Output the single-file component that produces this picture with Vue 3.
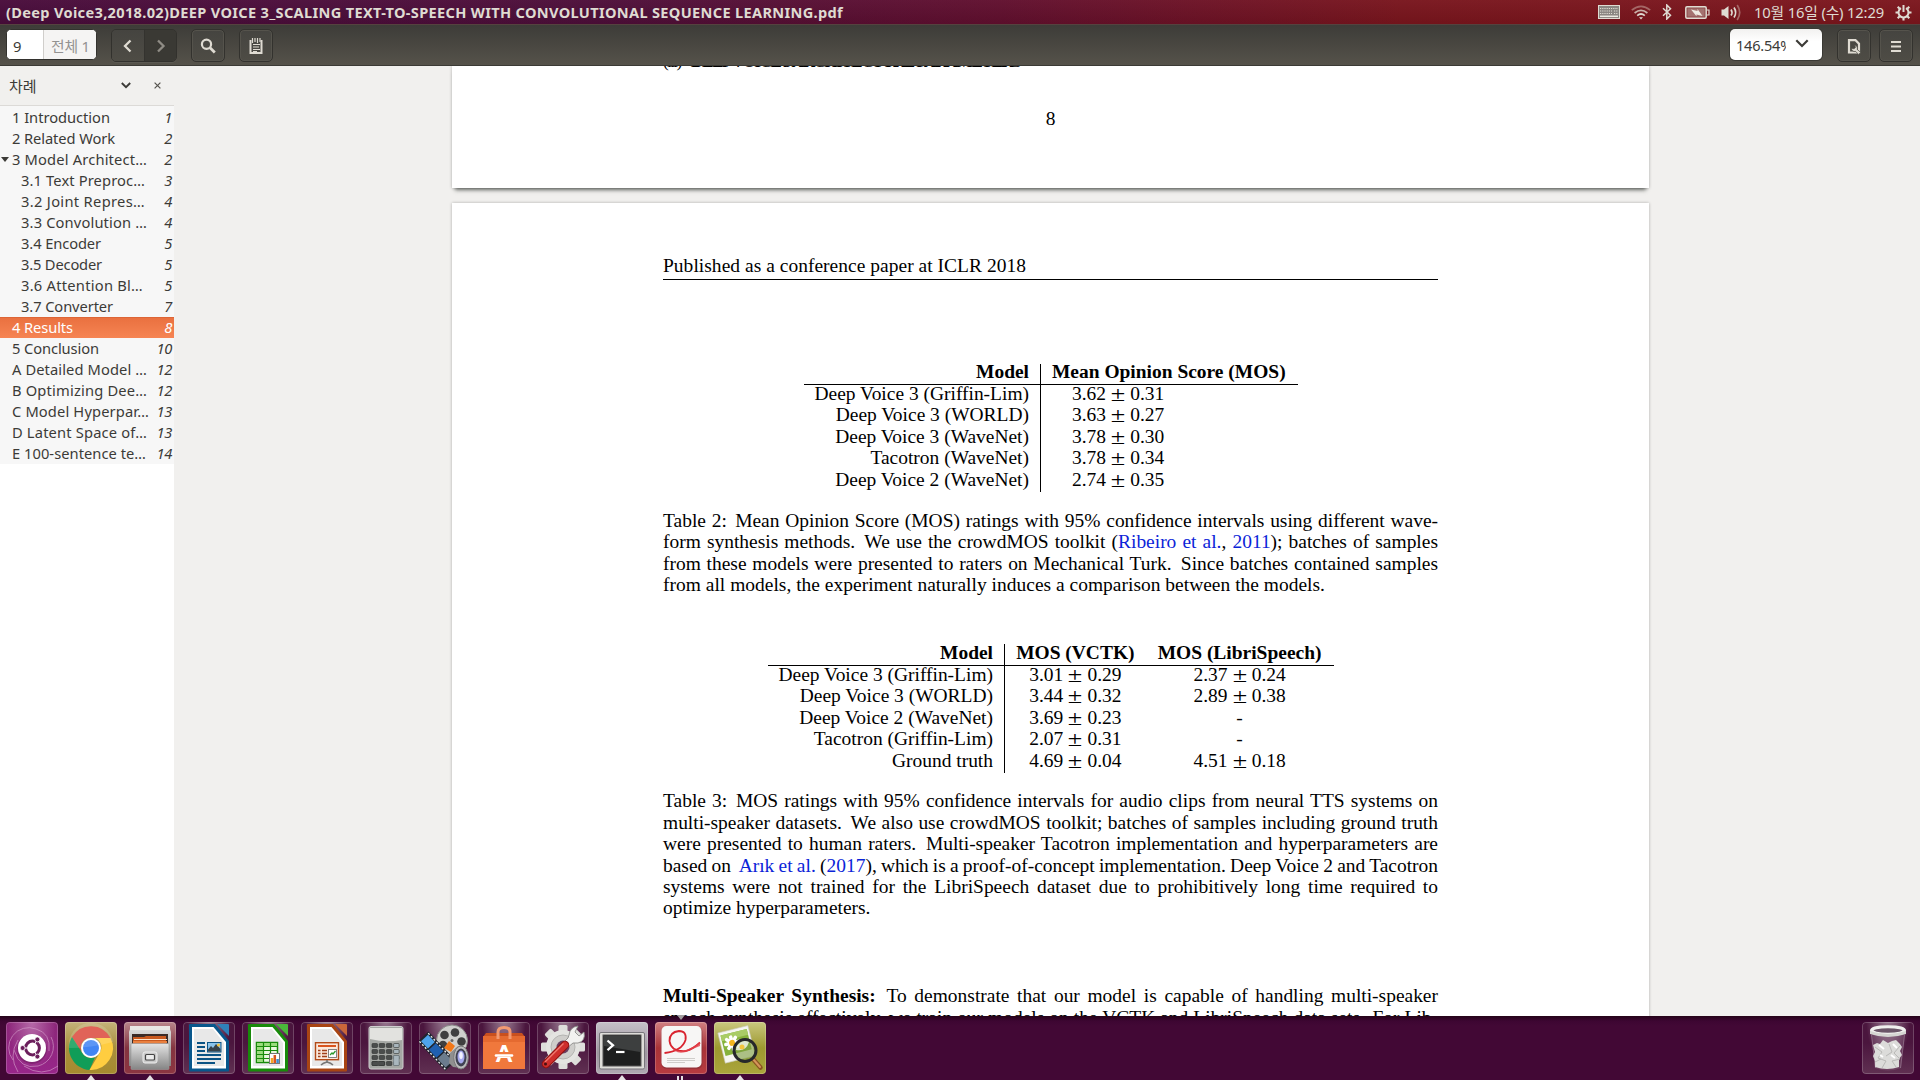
<script setup>
// Spreads the letters of a label so that it takes exactly the given width.
const fit = (el, width) => {
  const range = document.createRange()
  range.selectNodeContents(el)
  const natural = range.getBoundingClientRect().width
  el.style.letterSpacing = (width - natural) / el.textContent.length + 'px'
}
const vFit = {
  mounted: (el, { value }) => fit(el, value),
}

const outline = [
  { text: '1 Introduction', page: 1, w: 98 },
  { text: '2 Related Work', page: 2, w: 103 },
  { text: '3 Model Architect…', page: 2, w: 135, open: true },
  { text: '3.1 Text Preproc…', page: 3, w: 124, sub: true },
  { text: '3.2 Joint Repres…', page: 4, w: 124, sub: true },
  { text: '3.3 Convolution …', page: 4, w: 126, sub: true },
  { text: '3.4 Encoder', page: 5, w: 80, sub: true },
  { text: '3.5 Decoder', page: 5, w: 81, sub: true },
  { text: '3.6 Attention Bl…', page: 5, w: 122, sub: true },
  { text: '3.7 Converter', page: 7, w: 92, sub: true },
  { text: '4 Results', page: 8, w: 61, active: true },
  { text: '5 Conclusion', page: 10, w: 87 },
  { text: 'A Detailed Model …', page: 12, w: 135 },
  { text: 'B Optimizing Dee…', page: 12, w: 135 },
  { text: 'C Model Hyperpar…', page: 13, w: 137 },
  { text: 'D Latent Space of…', page: 13, w: 135 },
  { text: 'E 100-sentence te…', page: 14, w: 134 },
]

const table2 = [
  ['Deep Voice 3 (Griffin-Lim)', '3.62', '0.31'],
  ['Deep Voice 3 (WORLD)', '3.63', '0.27'],
  ['Deep Voice 3 (WaveNet)', '3.78', '0.30'],
  ['Tacotron (WaveNet)', '3.78', '0.34'],
  ['Deep Voice 2 (WaveNet)', '2.74', '0.35'],
]
const table3 = [
  ['Deep Voice 3 (Griffin-Lim)', '3.01', '0.29', '2.37', '0.24'],
  ['Deep Voice 3 (WORLD)', '3.44', '0.32', '2.89', '0.38'],
  ['Deep Voice 2 (WaveNet)', '3.69', '0.23'],
  ['Tacotron (Griffin-Lim)', '2.07', '0.31'],
  ['Ground truth', '4.69', '0.04', '4.51', '0.18'],
]
const calcKeys = [0, 1, 2, 3].flatMap((r) => [0, 1, 2, 3].map((c) => ({ r, c })))
const teeth = [0, 45, 90, 135, 180, 225, 270, 315]
</script>

<template>
  <div class="screen">
    <header class="panel">
      <span class="title" v-fit="837">(Deep Voice3,2018.02)DEEP VOICE 3_SCALING TEXT-TO-SPEECH WITH CONVOLUTIONAL SEQUENCE LEARNING.pdf</span>
      <div class="indicators">
        <svg class="kbd" width="22" height="14" viewBox="0 0 22 14">
          <rect x=".5" y=".5" width="21" height="13" fill="#8b8682" stroke="#dfdbd2" />
          <path d="M2 3.500h18M2 6h12M2 8.500h12M16 6h4M16 8.500h4" stroke="#dfdbd2" stroke-width="1.100" stroke-dasharray="1.200 1" />
          <path d="M2 11.300h18" stroke="#eeeae2" stroke-width="1.500" />
        </svg>
        <svg class="wifi" width="20" height="15" viewBox="0 0 20 15" fill="none" stroke-width="1.700">
          <path d="M.8 5.200Q10-2.600 19.200 5.200" stroke="#a56766" />
          <path d="M3.600 8Q10 2.600 16.400 8" stroke="#c9b0a9" />
          <path d="M6.200 10.600Q10 7.400 13.800 10.600" stroke="#dfdbd2" />
          <path d="M8 12.200h4l-2 2.300z" fill="#dfdbd2" stroke="none" />
        </svg>
        <svg class="bt" width="10" height="16" viewBox="0 0 10 16" fill="none" stroke="#dfdbd2" stroke-width="1.500">
          <path d="M1 4.300l7.500 7L4.800 15V1l3.700 3.700-7.500 7" />
        </svg>
        <svg class="batt" width="25" height="13" viewBox="0 0 25 13">
          <rect x=".8" y=".8" width="20.400" height="11.400" rx="1.200" fill="#8e4a4b" stroke="#dfdbd2" stroke-width="1.500" />
          <rect x="2.500" y="2.500" width="17" height="8" fill="#a47270" />
          <path d="M22 4h2v5h-2" fill="none" stroke="#dfdbd2" stroke-width="1.200" />
          <path d="M6 3.500l6.500 1.500V3l5 7-6-1.500v1.800z" fill="#eeeae2" />
        </svg>
        <svg class="vol" width="21" height="17" viewBox="0 0 21 17" fill="none">
          <path d="M.5 5.500H3L7.500 2v13L3 11.500H.5z" fill="#dfdbd2" />
          <path d="M10 5.500q2 3 0 6M13 3.500q3.300 5 0 10" stroke="#dfdbd2" stroke-width="1.700" />
          <path d="M16.200 1q5 7.500 0 15" stroke="#a56766" stroke-width="1.700" />
        </svg>
        <span class="clock" v-fit="130">10월 16일 (수) 12:29</span>
        <svg class="gear" width="17" height="17" viewBox="0 0 17 17" fill="none" stroke="#dfdbd2">
          <path d="M6 4.200A5 5 0 1 0 11 4.200" stroke-width="2" />
          <path d="M8.500 1v7" stroke-width="2" />
          <path d="M2.700 2.700l2 2M14.300 2.700l-2 2M.5 8.500h3M13.500 8.500h3M2.700 14.300l2-2M14.300 14.300l-2-2M8.500 13.500v3" stroke-width="2.100" />
        </svg>
      </div>
    </header>

    <div class="toolbar">
      <div class="pager">
        <div class="page-now">9</div>
        <div class="page-total"><span>전체 1</span></div>
      </div>
      <div class="nav">
        <button class="prev"><svg width="34" height="32" viewBox="0 0 34 32" fill="none" stroke="#dfdbd2" stroke-width="2.300"><path d="M19.500 10.500l-5.500 5.500 5.500 5.500" /></svg></button>
        <button class="next"><svg width="32" height="32" viewBox="0 0 32 32" fill="none" stroke="#8f8c85" stroke-width="2.300"><path d="M13 10.500l5.500 5.500-5.500 5.500" /></svg></button>
      </div>
      <button class="btn search">
        <svg width="34" height="32" viewBox="0 0 34 32" fill="none" stroke="#dfdbd2"><circle cx="15.500" cy="14.300" r="4.600" stroke-width="2.200" /><path d="M19 17.800l4.800 4.700" stroke-width="2.800" /></svg>
      </button>
      <button class="btn">
        <svg width="34" height="32" viewBox="0 0 34 32" fill="none" stroke="#dfdbd2"><path d="M11.500 10v13h11V10" stroke-width="2" /><path d="M13.500 8v5M16 8v4M18.500 8v5M21 8v4" stroke-width="1.200" /><path d="M14 14.500h7M14 17h6M14 19.500h7M14 21.500h4" stroke-width="1.100" /></svg>
      </button>
      <div class="grow"></div>
      <div class="zoom-box">
        <span class="zoom-text">146.54%</span>
        <svg width="14" height="9" viewBox="0 0 14 9" fill="none" stroke="#3c3b37" stroke-width="2.200"><path d="M1.300 1.300L7 7l5.700-5.700" /></svg>
      </div>
      <button class="btn view">
        <svg width="34" height="32" viewBox="0 0 34 32"><path d="M12 10.200h6.500l3.500 3.500v8.800h-10z" fill="none" stroke="#dfdbd2" stroke-width="2.200" /><path d="M14.600 18.200a3 3 0 0 0 4 3.200l3 3 2-2-3.400-3a3 3 0 0 0-2.800-4.200l1.200 2-1.500 1.600z" fill="#dfdbd2" stroke="#47463f" stroke-width=".7" /></svg>
      </button>
      <button class="btn menu">
        <svg width="34" height="32" viewBox="0 0 34 32" stroke="#dfdbd2" stroke-width="2"><path d="M12 12h10M12 16.500h10M12 21h10" /></svg>
      </button>
    </div>

    <main class="body">
      <aside class="sidebar">
        <div class="side-head">
          <span class="side-title">차례</span>
          <svg class="chev" width="10" height="7" viewBox="0 0 10 7" fill="none" stroke="#3c3b37" stroke-width="1.900"><path d="M.8 1L5 5.200 9.200 1" /></svg>
          <svg class="close" width="7" height="7" viewBox="0 0 7 7" fill="none" stroke="#55534e" stroke-width="1.200"><path d="M.6.6l5.800 5.800M6.400.6L.6 6.400" /></svg>
        </div>
        <div class="outline">
          <div v-for="row in outline" :key="row.text" class="row" :class="{ sub: row.sub, active: row.active, open: row.open }">
            <span class="label" v-fit="row.w">{{ row.text }}</span>
            <span class="num">{{ row.page }}</span>
          </div>
        </div>
      </aside>

      <section class="viewer">
        <article class="page prev-page">
          <div class="cut"><span v-fit="357">(iii)&nbsp; <b>DEEP VOICE 3 ARCHITECTURE PARAMETERS</b></span></div>
          <div class="folio">8</div>
        </article>
        <article class="page">
          <div class="running"><span v-fit="363">Published as a conference paper at ICLR 2018</span></div>

          <div class="tbl t2">
            <div class="tr th"><div class="c1">Model</div><div class="c2">Mean Opinion Score (MOS)</div></div>
            <div v-for="r in table2" :key="r[0]" class="tr">
              <div class="c1">{{ r[0] }}</div>
              <div class="c2 val">{{ r[1] }}<i class="pm">±</i>{{ r[2] }}</div>
            </div>
          </div>
          <div class="para cap2">
            <p>Table 2:<i class="s"></i> Mean Opinion Score (MOS) ratings with 95% confidence intervals using different wave-</p>
            <p>form synthesis methods.<i class="w"></i> We use the crowdMOS toolkit (<a>Ribeiro et al.</a>, <a>2011</a>); batches of samples</p>
            <p>from these models were presented to raters on Mechanical Turk.<i class="w"></i> Since batches contained samples</p>
            <p class="last"><span v-fit="662">from all models, the experiment naturally induces a comparison between the models.</span></p>
          </div>

          <div class="tbl t3">
            <div class="tr th"><div class="c1">Model</div><div class="c2">MOS (VCTK)</div><div class="c3">MOS (LibriSpeech)</div></div>
            <div v-for="r in table3" :key="r[0]" class="tr">
              <div class="c1">{{ r[0] }}</div>
              <div class="c2">{{ r[1] }}<i class="pm">±</i>{{ r[2] }}</div>
              <div class="c3"><template v-if="r[3]">{{ r[3] }}<i class="pm">±</i>{{ r[4] }}</template><template v-else>-</template></div>
            </div>
          </div>
          <div class="para cap3">
            <p>Table 3:<i class="s"></i> MOS ratings with 95% confidence intervals for audio clips from neural TTS systems on</p>
            <p>multi-speaker datasets.<i class="w"></i> We also use crowdMOS toolkit; batches of samples including ground truth</p>
            <p>were presented to human raters.<i class="w"></i> Multi-speaker Tacotron implementation and hyperparameters are</p>
            <p class="tight">based on<i class="w"></i> <a>Arık et al.</a> (<a>2017</a>), which is a proof-of-concept implementation. Deep Voice 2 and Tacotron</p>
            <p>systems were not trained for the LibriSpeech dataset due to prohibitively long time required to</p>
            <p class="last"><span v-fit="207.5">optimize hyperparameters.</span></p>
          </div>
          <div class="para multi">
            <p><b>Multi-Speaker Synthesis:</b><i class="w"></i> To demonstrate that our model is capable of handling multi-speaker</p>
            <p>speech synthesis effectively, we train our models on the VCTK and LibriSpeech data sets.<i class="s"></i> For Lib-</p>
          </div>
        </article>
      </section>
    </main>

    <footer class="dock">
      <div class="tile dash">
        <svg viewBox="0 0 52 52">
          <g fill="none" stroke="#d9a5d0" stroke-width="1" opacity=".6"><path d="M7 38A20 20 0 0 1 30 7q15 4 13 22" /><path d="M45 15A20 20 0 0 1 32 44Q14 48 8 28" /><path d="M12 50Q2 34 12 18" /><path d="M52 44Q36 56 18 44" /></g>
          <circle cx="26" cy="27" r="15" fill="#5c1450" opacity=".4" /><circle cx="26" cy="26" r="14" fill="#fff" />
          <circle cx="26.500" cy="26" r="6.900" fill="none" stroke="#6b1e5c" stroke-width="3" />
          <path d="M26.500 26h-9M26.500 26l4.500-8M26.500 26l4.500 8" stroke="#fff" stroke-width="1" />
          <g fill="#6b1e5c" stroke="#fff" stroke-width=".8"><circle cx="16.600" cy="26" r="2.500" /><circle cx="31.400" cy="17.400" r="2.500" /><circle cx="31.400" cy="34.600" r="2.500" /></g>
        </svg>
      </div>
      <div class="tile chrome"><i class="pip"></i>
        <svg viewBox="0 0 52 52">
          <path d="M7 15A22 22 0 0 1 45.500 16H26A10 10 0 0 0 17 31z" fill="#db4a3d" />
          <path d="M7 15l10.300 16A10 10 0 0 0 30 35.200L24.500 48A22 22 0 0 1 7 15z" fill="#109d58" />
          <path d="M45.500 16A22 22 0 0 1 24.500 48l10.200-17A10 10 0 0 0 30 16z" fill="#ffcd40" />
          <circle cx="26" cy="26" r="10" fill="#fff" /><circle cx="26" cy="26" r="8" fill="#4285f4" />
          <path d="M4 26A22 22 0 0 1 48 20Q26 26 4 26z" fill="#fff" opacity=".14" />
        </svg>
      </div>
      <div class="tile files"><i class="pip"></i>
        <svg viewBox="0 0 52 52">
          <defs><linearGradient id="cab" x2="0" y2="1"><stop offset="0" stop-color="#e4e4e4" /><stop offset="1" stop-color="#858585" /></linearGradient></defs>
          <path d="M7 4h38l2 6v34H5V10z" fill="url(#cab)" /><path d="M6 4h40v4H6z" fill="#e9e8e6" />
          <path d="M8 12h36v10H8z" fill="#3b2b27" /><path d="M9 15h11l2-1h20v8H9z" fill="#c9591f" /><path d="M10 17h33v1H10z" fill="#fce5cf" /><path d="M9 19h34v2H9z" fill="#e9803f" />
          <rect x="7" y="21.500" width="38" height="26" rx="1" fill="url(#cab)" stroke="#999" stroke-width=".6" />
          <rect x="19" y="30" width="14" height="11" rx="2" fill="#c9c9c9" stroke="#eee" /><rect x="21.500" y="32.500" width="9" height="5.500" rx="1" fill="#ececec" stroke="#444" stroke-width="1.200" />
        </svg>
      </div>
      <div class="tile">
        <svg viewBox="0 0 52 52">
          <path d="M7 2h25l14 17v29.500q0 1-1 1H7q-1 0-1-1V3q0-1 1-1z" fill="#08578c" /><path d="M34 2h11q1 0 1 1v11z" fill="#2f80b8" />
          <path d="M9 5h21.500L43 20v26.500H9z" fill="#fff" /><path d="M11 7h19l11 14v23H11z" fill="#e8e8e8" />
          <path d="M14 21h8M14 25h8M14 29h8M14 33h24M14 37h24M14 41h18" stroke="#0b5384" stroke-width="2" />
          <rect x="24.500" y="20.500" width="13.500" height="9.500" fill="#8bc3ea" stroke="#0b5384" /><path d="M25 29.500v-2l3-3.500 2 2 3-4 4.500 5v2.500z" fill="#37424a" /><circle cx="35.500" cy="23" r="1.500" fill="#f5c33b" />
        </svg>
      </div>
      <div class="tile">
        <svg viewBox="0 0 52 52">
          <path d="M7 2h25l14 17v29.500q0 1-1 1H7q-1 0-1-1V3q0-1 1-1z" fill="#188a0a" /><path d="M34 2h11q1 0 1 1v11z" fill="#4ab83a" />
          <path d="M9 5h21.500L43 20v26.500H9z" fill="#fff" /><path d="M11 7h19l11 14v23H11z" fill="#e8e8e8" />
          <rect x="14.500" y="20.500" width="21" height="20" fill="#eaf8df" stroke="#188a0a" stroke-width="1.500" /><path d="M15 21h20v3.500H15zM15 24h6v16h-6z" fill="#9bdc7d" />
          <path d="M21.500 21v20M28.500 21v20M14 24.500h21M14 28.500h21M14 32.500h21M14 36.500h21" stroke="#188a0a" stroke-width="1.200" />
          <rect x="27.500" y="31.500" width="10" height="10" fill="#fff" stroke="#777" /><path d="M30 41v-5" stroke="#f5a623" stroke-width="2.500" /><path d="M32.800 41v-8" stroke="#d9541e" stroke-width="2.500" /><path d="M35.600 41v-4" stroke="#3b8ad0" stroke-width="2.500" />
        </svg>
      </div>
      <div class="tile">
        <svg viewBox="0 0 52 52">
          <path d="M7 2h25l14 17v29.500q0 1-1 1H7q-1 0-1-1V3q0-1 1-1z" fill="#a84413" /><path d="M34 2h11q1 0 1 1v11z" fill="#c9663a" />
          <path d="M9 5h21.500L43 20v26.500H9z" fill="#fff" /><path d="M11 7h19l11 14v23H11z" fill="#e8e8e8" />
          <rect x="14.500" y="20.700" width="23" height="17" fill="#fbe9dc" stroke="#b24a17" stroke-width="1.400" /><path d="M17 24h18" stroke="#d9541e" stroke-width="2" />
          <path d="M17 28.500h2.500M17 31.500h2.500M17 34.500h2.500M21 28.500h5M21 31.500h5M21 34.500h5" stroke="#a0401a" stroke-width="1.300" />
          <rect x="27.500" y="27.500" width="8" height="8" fill="#fff" stroke="#777" stroke-width=".9" /><path d="M29 33l2-2 1 1 2.500-3" stroke="#2e9a2e" stroke-width="1.300" fill="none" />
          <path d="M26 38v2M20 43q2-2 6-3q4 1 6 3" stroke="#777" stroke-width="1.600" fill="none" />
        </svg>
      </div>
      <div class="tile">
        <svg viewBox="0 0 52 52">
          <rect x="9" y="4.500" width="34" height="42.500" rx="2" fill="#a5a8a4" stroke="#cfcfcf" /><path d="M10 6h32v12Q26 21 10 17z" fill="#e2e2df" />
          <g v-for="k in calcKeys" :key="k.r * 4 + k.c"><rect :x="12 + k.c * 7.200" :y="21.500 + k.r * 6" width="5.500" height="4" rx=".8" :fill="k.c === 3 ? '#a9b6bd' : '#4a4d4c'" stroke="#2d302f" stroke-width=".6" /></g>
          <rect x="12" y="39.500" width="12.500" height="4" rx=".8" fill="#4a4d4c" stroke="#2d302f" stroke-width=".6" /><rect x="33.600" y="33.500" width="5.500" height="10" rx=".8" fill="#a9b6bd" stroke="#68737a" stroke-width=".6" />
        </svg>
      </div>
      <div class="tile">
        <svg viewBox="0 0 52 52">
          <circle cx="33" cy="18.500" r="15.500" fill="#cfcfcc" stroke="#8a8a88" /><g fill="#3f3f3f"><circle cx="25.500" cy="13" r="4.300" /><circle cx="36" cy="10.500" r="4.300" /><circle cx="42.500" cy="19.500" r="4.300" /><circle cx="24" cy="23" r="4.300" /></g><circle cx="33" cy="18.500" r="1.500" fill="#666" />
          <g transform="rotate(47 18 29)"><rect x="-2" y="22" width="40" height="14.500" fill="#20242d" /><rect x="0" y="24.500" width="10" height="9.500" fill="#4ea3ec" /><rect x="11.500" y="24.500" width="11" height="9.500" fill="#1f5fb0" /><rect x="24" y="24.500" width="12" height="9.500" fill="#6b7c8e" /><path d="M-1 23.300h38M-1 35.300h38" stroke="#eee" stroke-width="1.300" stroke-dasharray="2 2" /></g>
          <path d="M30 19l6 5-4 6-7-4z" fill="#f27818" /><path d="M31 31l8-7 5 1-1 21-9-1-4-4z" fill="#8f8f8f" />
          <ellipse cx="42" cy="35.500" rx="7.300" ry="11.500" fill="#bdbdbd" stroke="#777" /><ellipse cx="42" cy="35.500" rx="5.500" ry="9" fill="#404252" /><ellipse cx="42" cy="35" rx="3.500" ry="6.500" fill="#a7a9ed" /><ellipse cx="42" cy="33.500" rx="1.800" ry="3.500" fill="#f2f3ff" />
        </svg>
      </div>
      <div class="tile">
        <svg viewBox="0 0 52 52">
          <path d="M5 15l3-4h36l3 4z" fill="#c9501e" /><path d="M5 14h42v33H5z" fill="#f0783c" /><path d="M5 14h42v6H5z" fill="#e56a30" />
          <path d="M20 17V10q0-4.500 6-4.500t6 4.500v7" fill="none" stroke="#f39a72" stroke-width="3" />
          <text x="26" y="39.500" text-anchor="middle" class="bag-letter">A</text><path d="M17 32.500h18" stroke="#f0783c" stroke-width="5" /><path d="M18 33.500h16" stroke="#fff" stroke-width="2.600" stroke-linecap="round" />
        </svg>
      </div>
      <div class="tile">
        <svg viewBox="0 0 52 52">
          <g fill="#dededb"><rect v-for="a in teeth" :key="a" x="21.500" y="3" width="9" height="10" rx="1.500" :transform="`rotate(${a} 26 25)`" /></g>
          <circle cx="26" cy="25" r="17" fill="#e4e4e1" /><circle cx="26" cy="25" r="12" fill="#cfcecb" stroke="#b5b5b2" /><circle cx="26" cy="25" r="6.500" fill="#6a4163" />
          <path d="M32 13q1-8 9-9l-3 6 4 4 5-4q2 9-6 11l-5 0-6 5-5-4 6-6z" fill="#f2f2f0" stroke="#8d8d8b" stroke-width=".9" />
          <path d="M28 23L9 42" stroke="#8e1212" stroke-width="8.500" stroke-linecap="round" /><path d="M28 23L9 42" stroke="#cf2e2c" stroke-width="6.500" stroke-linecap="round" /><path d="M26.500 21.500L8 40" stroke="#ef7a70" stroke-width="1.300" /><circle cx="8.500" cy="42" r="1.500" fill="#4a0f0f" />
        </svg>
      </div>
      <div class="tile term"><i class="pip"></i>
        <svg viewBox="0 0 52 52">
          <rect x="3.500" y="10.500" width="45" height="36.500" rx="1.500" fill="#deddd9" stroke="#77757a" /><rect x="7" y="13" width="38" height="31" fill="#1e1f1f" stroke="#555" /><path d="M8 14h36v16L8 24z" fill="#3d3f3f" />
          <path d="M11.500 18.500l5.500 4.800-5.500 4.800" fill="none" stroke="#fff" stroke-width="2.300" /><path d="M20 30h8.500" stroke="#fff" stroke-width="2.200" />
        </svg>
      </div>
      <div class="tile pdf"><i class="focus"></i><i class="pip two"></i>
        <svg viewBox="0 0 52 52">
          <rect x="6.500" y="5" width="41" height="42" rx="5" fill="#7b3035" opacity=".5" /><rect x="6.500" y="4" width="40" height="41.500" rx="5" fill="#f7f6f5" />
          <path d="M9.500 31Q27 29 30.500 18Q32 9 24 9Q14.500 10 14.500 19Q16 30 31 29Q38 27 45 20.500" fill="none" stroke="#d9232e" stroke-width="1.800" /><path d="M16 24Q20 31 31 28Q38 26 45 20v4Q37 27 31 30Q20 33 16 24z" fill="#e4444c" opacity=".8" />
          <path d="M12 36.500h28M12 38.500h28M12 40.500h18" stroke="#cfcdca" stroke-width="1" />
        </svg>
      </div>
      <div class="tile eye"><i class="pip"></i>
        <svg viewBox="0 0 52 52">
          <g transform="rotate(-14 22 22)"><rect x="7" y="7" width="31" height="31" fill="#f6f6f2" stroke="#c9c9b8" stroke-width=".6" /><rect x="9" y="10" width="27" height="21" fill="#86b23c" /><path d="M9 10h27v6H9z" fill="#a9cc66" />
            <g stroke="#fff" stroke-width="3.500" stroke-linecap="round"><path d="M12 20h13M18.500 14v13M14 15.500l9 9M23 15.500l-9 9" /></g><circle cx="18.500" cy="20" r="3" fill="#f3b51e" /></g>
          <path d="M39 37l7.500 8.500" stroke="#8a5420" stroke-width="4.500" stroke-linecap="round" /><path d="M39 37l7 8" stroke="#d4955a" stroke-width="2" stroke-linecap="round" />
          <circle cx="31" cy="28.500" r="11" fill="#7c9d3c" fill-opacity=".6" stroke="#26282a" stroke-width="3" /><path d="M22 28a9 9 0 0 1 13-8Q32 30 22 28z" fill="#fff" opacity=".75" /><circle cx="28" cy="25" r="2.500" fill="#f3c63e" />
        </svg>
      </div>
      <div class="tile trash">
        <svg viewBox="0 0 52 52">
          <path d="M9 12l4 34q13 5 26 0l4-34z" fill="#fff" opacity=".1" />
          <path d="M11 23l4-2 3 1 3-4 5 3 4-2 4-1 4 4 2 3-2 4 2 4-3 4v8q-12 4-24 0v-6l-2-5 2-4z" fill="#dcdcda" />
          <path d="M13 25l7 5-4 6 8 3-4 7M27 22l3 8-6 4M38 24l-6 7 6 6-8 2 4 6M13 40l6-3" stroke="#b9b9b7" stroke-width="1" fill="none" /><path d="M17 23l5 4M31 22l4 4M29 33l4 3M18 33l3 2" stroke="#fff" stroke-width="2" />
          <path d="M9.500 13l4 33M42.500 13l-4 33" stroke="#c9b8c6" stroke-width=".6" opacity=".6" />
          <ellipse cx="26" cy="8.500" rx="16.500" ry="3.700" fill="#6b5568" stroke="#f0f0ee" stroke-width="3" /><path d="M8 9v3q18 6 36 0V9q-18 6-36 0z" fill="#d5d5d2" />
        </svg>
      </div>
    </footer>
  </div>
</template>

<style>
body { margin: 0; overflow: hidden; }
</style>

<style scoped>
.screen { width: 1920px; height: 1080px; display: flex; flex-direction: column; overflow: hidden; font-family: "Noto Sans", "Noto Sans CJK KR", sans-serif; color: #3c3b37; }
.panel { height: 24px; flex: none; display: flex; align-items: center; justify-content: space-between; box-sizing: border-box; padding: 0 8px 0 6px; background: linear-gradient(180deg, rgba(255,255,255,.03), rgba(0,0,0,.07)), linear-gradient(90deg, #490c3b 0, #4d0e39 600px, #610f2e 1000px, #79151d 1400px, #7c161d 100%); color: #dfdbd2; }
.title { font-weight: 700; font-size: 14.600px; line-height: 24px; white-space: nowrap; }
.indicators { display: flex; align-items: center; white-space: nowrap; }
.kbd { margin-right: 11px; }
.wifi { margin-right: 11px; }
.bt { margin-right: 13px; }
.batt { margin-right: 11px; }
.vol { margin-right: 12px; }
.clock { width: 130px; margin-right: 11px; font-size: 14.800px; line-height: 24px; }
.toolbar { height: 42px; flex: none; box-sizing: border-box; border-top: 1px solid #55423f; border-bottom: 1px solid #3b3a35; background: linear-gradient(#3d3c38, #55524a); display: flex; padding: 4px 7px 0 6px; }
.pager { width: 91px; height: 31px; display: flex; border-radius: 5px; background: #fff; font-size: 14.800px; line-height: 32px; overflow: hidden; box-sizing: border-box; border: 1px solid #33322e; margin-right: 14px; }
.page-now { width: 37px; box-sizing: border-box; padding-left: 6px; border-right: 1px solid #d0cecb; background: #fff; }
.page-total { flex: 1; background: #f5f4f3; color: #939291; padding-left: 7px; white-space: nowrap; letter-spacing: -.2px; }
button { padding: 0; margin: 0; border: 0; background: none; display: block; }
button svg { display: block; }
.nav { display: flex; width: 66px; height: 33px; box-sizing: border-box; border: 1px solid #32312d; border-radius: 5px; overflow: hidden; margin-right: 14px; box-shadow: 0 1px 0 #5b5952; }
.prev { width: 32px; background: linear-gradient(#454440, #4e4c45); }
.prev svg { margin-left: -1px; }
.next { width: 33px; background: #3a3934; border-left: 1px solid #34332f; }
.btn { width: 34px; height: 33px; box-sizing: border-box; border: 1px solid #33322e; border-radius: 5px; background: linear-gradient(#454440, #4e4c45); box-shadow: 0 0 0 1px #55534c inset; overflow: hidden; }
.btn svg { margin: -1px; }
.search { margin-right: 14px; }
.grow { flex: 1; }
.zoom-box { width: 92px; height: 31px; border-radius: 5px; box-sizing: border-box; background: linear-gradient(#f2f1f0, #fff 40%); box-shadow: 0 0 0 1px #3a3934; display: flex; padding-left: 6px; font-size: 14.500px; line-height: 33px; margin-right: 15px; }
.zoom-text { width: 50px; overflow: hidden; letter-spacing: -.2px; }
.zoom-box svg { margin: 10px 0 0 9px; }
.view { margin-right: 8px; }
.body { height: 950px; flex: none; display: flex; background: #f1f0ee; overflow: hidden; }
.sidebar { width: 174px; flex: none; background: #fff; display: flex; flex-direction: column; }
.side-head { height: 39px; background: #f1f0ee; display: flex; align-items: center; border-bottom: 1px solid #dcdad7; }
.side-title { font-size: 15px; margin-left: 9px; width: 112px; }
.chev { margin-right: 23px; }
.outline { background: #f7f7f7; padding-top: 1px; }
.row { height: 21px; line-height: 21px; font-size: 14.700px; display: flex; justify-content: space-between; padding: 0 2px 0 12px; white-space: nowrap; position: relative; }
.row.sub { padding-left: 21px; }
.row.active { background: linear-gradient(#e9703f, #f68453); color: #fff; box-shadow: inset 0 1px 0 #dd6536; }
.row.open::before { content: ""; position: absolute; left: 1px; top: 8px; border: 4px solid transparent; border-top: 5px solid #3c3b37; border-bottom: 0; }
.num { font-style: italic; letter-spacing: -.3px; }
.viewer { flex: 1; font-family: "Liberation Serif", serif; color: #000; font-size: 19.470px; overflow: hidden; display: flex; flex-direction: column; padding-left: 278px; }
.page { width: 1197px; box-sizing: border-box; flex: none; background: #fff; padding: 52px 211px 0; height: 900px; box-shadow: 0 0 3px rgba(0,0,0,.28); }
.prev-page { height: 122px; padding-top: 0; margin-bottom: 15px; box-shadow: 0 0 3px rgba(0,0,0,.25), 0 5px 4px -3px rgba(60,65,60,.75); }
.cut { height: 21px; margin-top: -15px; line-height: 21px; font-size: 17.500px; white-space: nowrap; }
.cut b { margin-left: 5px; }
.folio { text-align: center; line-height: 22px; margin-top: 36px; }
.running { height: 24px; line-height: 21px; border-bottom: 1px solid #000; white-space: nowrap; width: 775px; }
.tbl { margin: 0 auto; }
.tr { display: flex; height: 21.400px; line-height: 17.800px; white-space: nowrap; }
.tr > div { box-sizing: border-box; }
.c1 { text-align: right; padding-right: 11px; border-right: 1.500px solid #000; flex: none; height: 100%; }
.th { font-weight: 700; line-height: 15px; height: 20.500px; border-bottom: 1px solid #000; }
.t2 { margin-top: 83.500px; width: 494px; }
.t2 .c1 { width: 237.500px; }
.t2 .c2 { padding-left: 11px; }
.t2 .val { padding-left: 31px; }
.t3 { margin-top: 48px; width: 566px; }
.t3 .th { height: 21.500px; line-height: 17.500px; }
.t3 .c1 { width: 237.500px; }
.t3 .c2 { width: 140.700px; text-align: center; }
.t3 .c3 { flex: 1; text-align: center; }
.pm { font-style: normal; display: inline-block; width: 1.240em; text-align: center; font-weight: 400; transform: scale(1.350, 1.100); line-height: 17px; }
.para { width: 775px; }
.para p { margin: 0; height: 21.400px; line-height: 21.400px; white-space: nowrap; text-align: justify; text-align-last: justify; }
.para p:not(.last) { white-space: normal; word-spacing: -1.500px; }
.para p.last { text-align-last: left; }
.para i { display: inline-block; width: 2.500px; }
.para i.w { width: 3.500px; }
.para .tight i.w { width: 4.500px; }
.para a { color: #0b24d8; }
.cap2 { margin-top: 18px; }
.cap3 { margin-top: 17.500px; }
.multi { margin-top: 66.500px; }
.dock { height: 64px; flex: none; box-sizing: border-box; padding: 6px 6px 0; display: flex; gap: 7px; background: linear-gradient(#250318 0, #3d0632 5px, #420835 10px); position: relative; }
.tile { width: 52px; height: 52px; flex: none; border-radius: 4px; position: relative; background: radial-gradient(ellipse at 50% -10%, rgba(255,255,255,.45), rgba(255,255,255,.12) 45%, rgba(255,255,255,0) 60%), linear-gradient(#4b163e 40%, #603052); box-shadow: inset 0 0 0 1px rgba(255,255,255,.2); }
.tile svg { display: block; width: 52px; height: 52px; }
.dash { background: radial-gradient(ellipse at 50% 0, #b669a8, transparent 65%), linear-gradient(#8c2779, #98268a); }
.chrome { background: linear-gradient(#c4b37a, #a98f3c 50%, #a68a2f); }
.files { background: linear-gradient(#b9868c, #843440 50%, #8c3541); }
.term { background: linear-gradient(#c5c0c8, #9d959f 60%, #b0a9b2); }
.pdf { background: linear-gradient(#d17f81, #a93338 50%, #b73b40); }
.eye { background: linear-gradient(#cac77f, #9d992f 50%, #aaa53b); }
.trash { margin-left: auto; }
.pip { position: absolute; left: 22px; top: 53px; border: 4px solid transparent; border-top: 0; border-bottom: 5px solid #e4dfe2; }
.pip.two { left: 22px; top: 54px; border: 0; width: 2px; height: 4px; background: #e4dfe2; box-shadow: 4px 0 0 #e4dfe2; }
.focus { position: absolute; left: 22px; top: -7px; border: 4px solid transparent; border-bottom: 0; border-top: 5px solid #a29d9f; }
.bag-letter { font: 900 23px "Lato", sans-serif; fill: #fff; }
</style>
